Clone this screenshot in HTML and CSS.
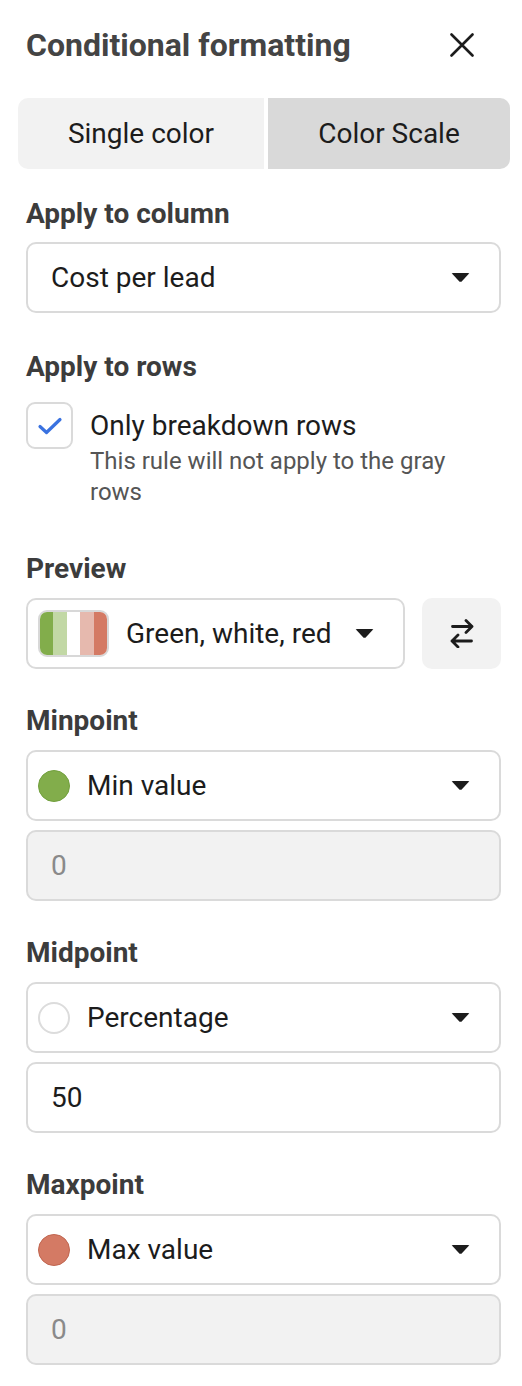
FILE: index.html
```html
<!DOCTYPE html>
<html lang="en">
<head>
<meta charset="utf-8">
<title>Conditional formatting</title>
<link rel="stylesheet" href="styles.css">
</head>
<body>
<div class="panel">
  <header class="head">
    <h1 class="title">Conditional formatting</h1>
    <button class="close" aria-label="Close">
      <svg width="24" height="24" viewBox="0 0 24 24"><path d="M1.5 1.5 L22.5 22.5 M22.5 1.5 L1.5 22.5" stroke="#1c1c1c" stroke-width="2.6" stroke-linecap="round" fill="none"/></svg>
    </button>
  </header>

  <div class="tabs">
    <div class="tab">Single color</div>
    <div class="tab active">Color Scale</div>
  </div>

  <section class="sec sec-column">
    <div class="label">Apply to column</div>
    <div class="select">
      <span class="sel-text">Cost per lead</span>
      <span class="caret"></span>
    </div>
  </section>

  <section class="sec sec-rows">
    <div class="label">Apply to rows</div>
    <div class="check-row">
      <span class="checkbox">
        <svg width="26" height="20" viewBox="0 0 26 20"><path d="M3 10.5 L9.5 16.5 L23 3.5" stroke="#3a72e0" stroke-width="3.2" stroke-linecap="round" stroke-linejoin="round" fill="none"/></svg>
      </span>
      <div class="check-text">
        <div class="check-title">Only breakdown rows</div>
        <div class="check-sub">This rule will not apply to the gray rows</div>
      </div>
    </div>
  </section>

  <section class="sec sec-preview">
    <div class="label">Preview</div>
    <div class="preview-row">
      <div class="select preview-select">
        <span class="swatch"><i class="s1"></i><i class="s2"></i><i class="s3"></i><i class="s4"></i><i class="s5"></i></span>
        <span class="sel-text">Green, white, red</span>
        <span class="caret"></span>
      </div>
      <button class="swap" aria-label="Swap">
        <svg width="24" height="29" viewBox="0 0 24 29"><path d="M2.5 7.5 H22 M16 1.5 L22 7.5 L16 13.5 M21.5 22 H2 M8 16 L2 22 L8 28" stroke="#1c1c1c" stroke-width="2.8" stroke-linecap="round" stroke-linejoin="round" fill="none"/></svg>
      </button>
    </div>
  </section>

  <section class="sec sec-point">
    <div class="label">Minpoint</div>
    <div class="select">
      <span class="dot dot-green"></span>
      <span class="sel-text">Min value</span>
      <span class="caret"></span>
    </div>
    <div class="input disabled">0</div>
  </section>

  <section class="sec sec-point">
    <div class="label">Midpoint</div>
    <div class="select">
      <span class="dot dot-white"></span>
      <span class="sel-text">Percentage</span>
      <span class="caret"></span>
    </div>
    <div class="input">50</div>
  </section>

  <section class="sec sec-point">
    <div class="label">Maxpoint</div>
    <div class="select">
      <span class="dot dot-red"></span>
      <span class="sel-text">Max value</span>
      <span class="caret"></span>
    </div>
    <div class="input disabled">0</div>
  </section>
</div>
</body>
</html>
```
FILE: styles.css
```css
* { box-sizing: border-box; }
html, body { margin: 0; padding: 0; background: #fff; }
body { font-family: Roboto, "Liberation Sans", Arial, sans-serif; color: #1c1c1c; }

.panel { width: 522px; padding: 0 21px 0 26px; }

.head {
  display: flex;
  align-items: center;
  justify-content: space-between;
  height: 46px;
  margin-top: 22px;
}
.title {
  margin: 0;
  font-size: 32px;
  font-weight: 700;
  color: #444;
  letter-spacing: 0;
}
.close {
  border: 0; background: none; padding: 0; margin-right: 27px;
  width: 24px; height: 24px; display: flex;
}

.tabs {
  display: flex;
  gap: 4px;
  margin: 30px -9px 0 -8px;
  height: 71px;
}
.tab {
  flex: 1;
  display: flex;
  align-items: center;
  justify-content: center;
  background: #f2f2f2;
  font-size: 28px;
  color: #1c1c1c;
}
.tab:first-child { flex: 0 0 246px; border-radius: 10px 0 0 10px; }
.tab.active { background: #d9d9d9; border-radius: 0 10px 10px 0; }

.label {
  font-size: 28px;
  font-weight: 700;
  color: #3c3c3c;
  line-height: 30px;
  margin-bottom: 14px;
}

.sec-column { margin-top: 30px; }
.sec-column .label { margin-bottom: 13px; }
.sec-rows { margin-top: 39px; }
.sec-preview { margin-top: 46px; }
.sec-point { margin-top: 37px; }

.select {
  display: flex;
  align-items: center;
  height: 71px;
  border: 2px solid #dadada;
  border-radius: 10px;
  padding: 0 29px 0 23px;
  background: #fff;
}
.sel-text { flex: 1; font-size: 28px; color: #1c1c1c; }
.caret {
  width: 19px; height: 10px;
  background: #1c1c1c;
  clip-path: polygon(0 0, 100% 0, 55% 92%, 45% 92%);
  border-radius: 2px;
}

.check-row { display: flex; gap: 17px; margin-top: 20px; }
.checkbox {
  flex: none;
  width: 47px; height: 47px;
  border: 2px solid #dadada;
  border-radius: 9px;
  display: flex; align-items: center; justify-content: center;
}
.check-title { font-size: 28px; line-height: 40px; margin-top: 4px; color: #1c1c1c; }
.check-sub { font-size: 24px; line-height: 31px; color: #555; padding-right: 30px; }

.preview-row { display: flex; gap: 17px; }
.preview-select { flex: 1; padding-left: 10px; padding-right: 29px; }
.preview-select .sel-text { flex: 1; margin-left: 17px; }
.swatch {
  display: flex;
  width: 71px; height: 47px;
  border: 2px solid #d8d8d8;
  border-radius: 9px;
  overflow: hidden;
}
.swatch i { flex: 1; }
.s1 { background: #82ad4b; }
.s2 { background: #c2d8a5; }
.s3 { background: #ffffff; }
.s4 { background: #e6b9ae; }
.s5 { background: #d47a64; }
.swap {
  flex: none;
  width: 79px; height: 71px;
  border: 0;
  border-radius: 10px;
  background: #f2f2f2;
  display: flex; align-items: center; justify-content: center;
  padding: 0;
}

.sec-point .select { padding-left: 10px; }
.dot {
  width: 32px; height: 32px; border-radius: 50%;
  margin-right: 17px;
  flex: none;
}
.dot-green { background: #82ad4b; border: 1.5px solid #72a03e; }
.dot-white { background: #fff; border: 2px solid #dcdcdc; }
.dot-red { background: #d47a64; border: 1.5px solid #c06650; }

.input {
  margin-top: 9px;
  height: 71px;
  border: 2px solid #dadada;
  border-radius: 10px;
  padding: 0 23px;
  display: flex; align-items: center;
  font-size: 28px;
  color: #1c1c1c;
}
.input.disabled { background: #f2f2f2; color: #8a8a8a; }
```
